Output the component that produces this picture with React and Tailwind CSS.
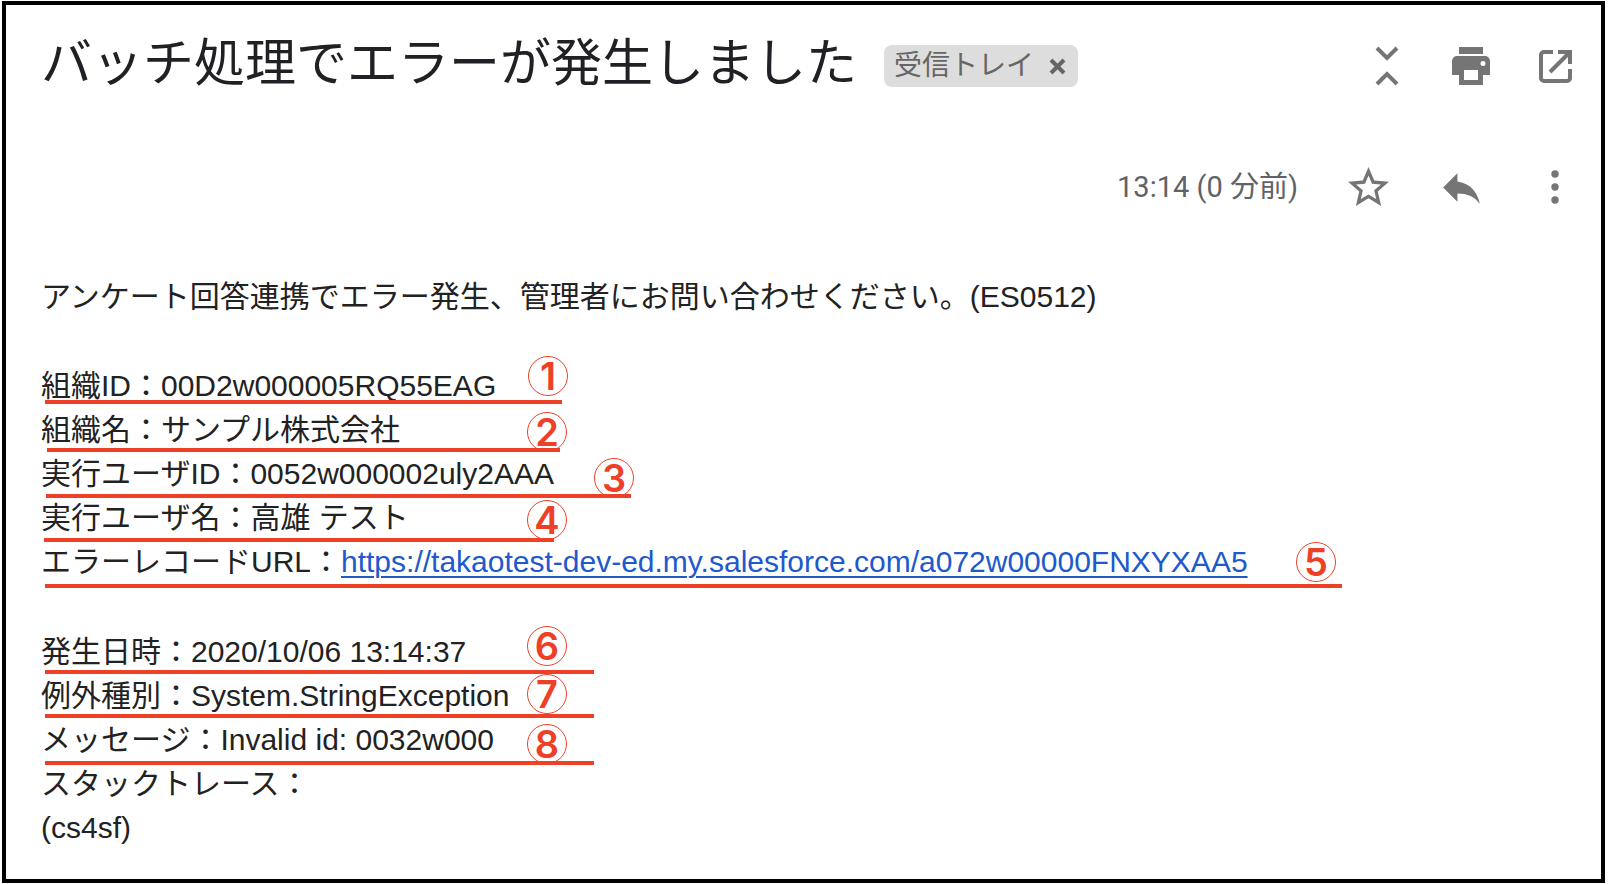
import React from 'react';

const rows = [
  {
    label: '組織ID',
    value: '00D2w000005RQ55EAG',
    mark: { no: 1, line: 'left-1 top-9 w-[517px]', pin: 'left-[487px] -top-2' },
  },
  {
    label: '組織名',
    value: 'サンプル株式会社',
    mark: { no: 2, line: 'left-[6px] top-10 w-[513px]', pin: 'left-[486px] top-1' },
  },
  {
    label: '実行ユーザID',
    value: '0052w000002uly2AAA',
    mark: { no: 3, line: 'left-[5px] top-[42px] w-[585px]', pin: 'left-[553px] top-[6px]' },
  },
  {
    label: '実行ユーザ名',
    value: '高雄 テスト',
    mark: { no: 4, line: 'left-[3px] top-[42px] w-[510px]', pin: 'left-[486px] top-1' },
  },
  {
    label: 'エラーレコードURL',
    href: 'https://takaotest-dev-ed.my.salesforce.com/a072w00000FNXYXAA5',
    mark: { no: 5, line: 'left-1 top-11 w-[1297px]', pin: 'left-[1255px] top-[2px]' },
  },
];

const details = [
  {
    label: '発生日時',
    value: '2020/10/06 13:14:37',
    mark: { no: 6, line: 'left-1 top-10 w-[549px]', pin: 'left-[486px] -top-1' },
  },
  {
    label: '例外種別',
    value: 'System.StringException',
    mark: { no: 7, line: 'left-1 top-10 w-[549px]', pin: 'left-[486px] top-0' },
  },
  {
    label: 'メッセージ',
    value: 'Invalid id: 0032w000',
    mark: { no: 8, line: 'left-1 top-[43px] w-[549px]', pin: 'left-[486px] top-[6px]' },
  },
  { label: 'スタックトレース', value: '' },
];

function IconButton({ label, className, children }) {
  return (
    <button
      type="button"
      aria-label={label}
      className={`flex h-12 items-center justify-center text-[#757575] ${className}`}
    >
      {children}
    </button>
  );
}

function CollapseIcon() {
  return (
    <svg width="24" height="40" viewBox="0 0 24 40" fill="none" stroke="currentColor" strokeWidth="4">
      <path d="M2 2l10 10L22 2M2 38l10-10 10 10" />
    </svg>
  );
}

function PrintIcon() {
  return (
    <svg width="38" height="38" viewBox="0 0 38 38" fill="currentColor">
      <path d="M7 0h24v7H7z" />
      <path
        fillRule="evenodd"
        d="M5 9h28a5 5 0 0 1 5 5v14h-7v10H7V28H0V14a5 5 0 0 1 5-5zm7 14v10h14V23zM31 14a2.5 2.5 0 1 0 0 5 2.5 2.5 0 0 0 0-5z"
      />
    </svg>
  );
}

function OpenIcon() {
  return (
    <svg width="33" height="33" viewBox="0 0 33 33" fill="none" stroke="currentColor" strokeWidth="4">
      <path d="M14 2H5a3 3 0 0 0-3 3v23a3 3 0 0 0 3 3h23a3 3 0 0 0 3-3v-9" />
      <path d="M19 2h12v12M30 3L11 22" />
      <path d="M24 2h7v7z" fill="currentColor" stroke="none" />
    </svg>
  );
}

function StarIcon() {
  return (
    <svg width="49" height="49" viewBox="0 0 24 24" fill="currentColor">
      <path d="M22 9.24l-7.19-.62L12 2 9.19 8.63 2 9.24l5.46 4.73L5.82 21 12 17.27 18.18 21l-1.63-7.03L22 9.24zM12 15.4l-3.76 2.27 1-4.28-3.32-2.88 4.38-.38L12 6.1l1.71 4.04 4.38.38-3.32 2.88 1 4.28L12 15.4z" />
    </svg>
  );
}

function ReplyIcon() {
  return (
    <svg width="49" height="49" viewBox="0 0 24 24" fill="currentColor">
      <path d="M10 9V5l-7 7 7 7v-4.1c5 0 8.5 1.6 11 5.1-1-5-4-10-11-11z" />
    </svg>
  );
}

function MoreIcon() {
  return (
    <svg width="8" height="34" viewBox="0 0 8 34" fill="currentColor">
      <circle cx="4" cy="4" r="3.7" />
      <circle cx="4" cy="17" r="3.7" />
      <circle cx="4" cy="30" r="3.7" />
    </svg>
  );
}

/** Hand-placed underline plus circled number laid over a row. */
function Mark({ no, line, pin }) {
  return (
    <>
      <span className={`absolute h-1 bg-[#ee4026] ${line}`} />
      <span
        className={`absolute flex size-10 items-center justify-center rounded-full border border-[#ee4026] font-['Inter',sans-serif] text-[38px] leading-none font-semibold text-[#ee4026] ${pin}`}
      >
        {no}
      </span>
    </>
  );
}

function Row({ label, value, href, mark }) {
  return (
    <div className="relative whitespace-nowrap">
      {label}：
      {href ? (
        <a href={href} className="text-[#2059cc] underline decoration-2 underline-offset-4">
          {href}
        </a>
      ) : (
        value
      )}
      {mark && <Mark {...mark} />}
    </div>
  );
}

export default function App() {
  return (
    <div className="flex min-h-screen bg-white pt-px pr-[3px] pb-px pl-[2px]">
      <main className="flex-1 border-4 border-black font-['Roboto','Noto_Sans_CJK_JP',sans-serif]">
        <header className="flex h-[122px] items-center pr-1 pl-[35px]">
          <h1 className="pb-1 text-[51px] leading-[64px] whitespace-nowrap text-[#202124]">
            バッチ処理でエラーが発生しました
          </h1>
          <div className="ml-[27px] flex h-[42px] items-center rounded-lg bg-[#dddddd] pr-3 pl-[10px] text-[28px] leading-none whitespace-nowrap text-[#666666]">
            <span>受信トレイ</span>
            <button type="button" aria-label="ラベルを削除" className="ml-[15px]">
              <svg width="17" height="17" viewBox="0 0 17 17" stroke="currentColor" strokeWidth="4">
                <path d="M2 2l13 13M15 2L2 15" />
              </svg>
            </button>
          </div>
          <div className="ml-auto flex">
            <IconButton label="すべて折りたたむ" className="w-[84px]">
              <CollapseIcon />
            </IconButton>
            <IconButton label="印刷" className="w-[84px]">
              <PrintIcon />
            </IconButton>
            <IconButton label="新しいウィンドウで開く" className="w-[84px]">
              <OpenIcon />
            </IconButton>
          </div>
        </header>

        <div className="flex h-[120px] items-center justify-end">
          <time className="mr-6 text-[29px] leading-none text-[#5f6368]">13:14 (0 分前)</time>
          <IconButton label="スター" className="w-[93px]">
            <StarIcon />
          </IconButton>
          <IconButton label="返信" className="w-[93px]">
            <ReplyIcon />
          </IconButton>
          <IconButton label="その他" className="w-[93px]">
            <MoreIcon />
          </IconButton>
        </div>

        <article className="mt-7 px-[35px] font-['Liberation_Sans','Noto_Sans_CJK_JP',sans-serif] text-[30px] leading-[44px] text-[#222222]">
          <p className="whitespace-nowrap">
            アンケート回答連携でエラー発生、管理者にお問い合わせください。(ES0512)
          </p>
          <section className="mt-[45px]">
            {rows.map((row) => (
              <Row key={row.label} {...row} />
            ))}
          </section>
          <section className="mt-[46px]">
            {details.map((row) => (
              <Row key={row.label} {...row} />
            ))}
          </section>
          <p>(cs4sf)</p>
        </article>
      </main>
    </div>
  );
}
